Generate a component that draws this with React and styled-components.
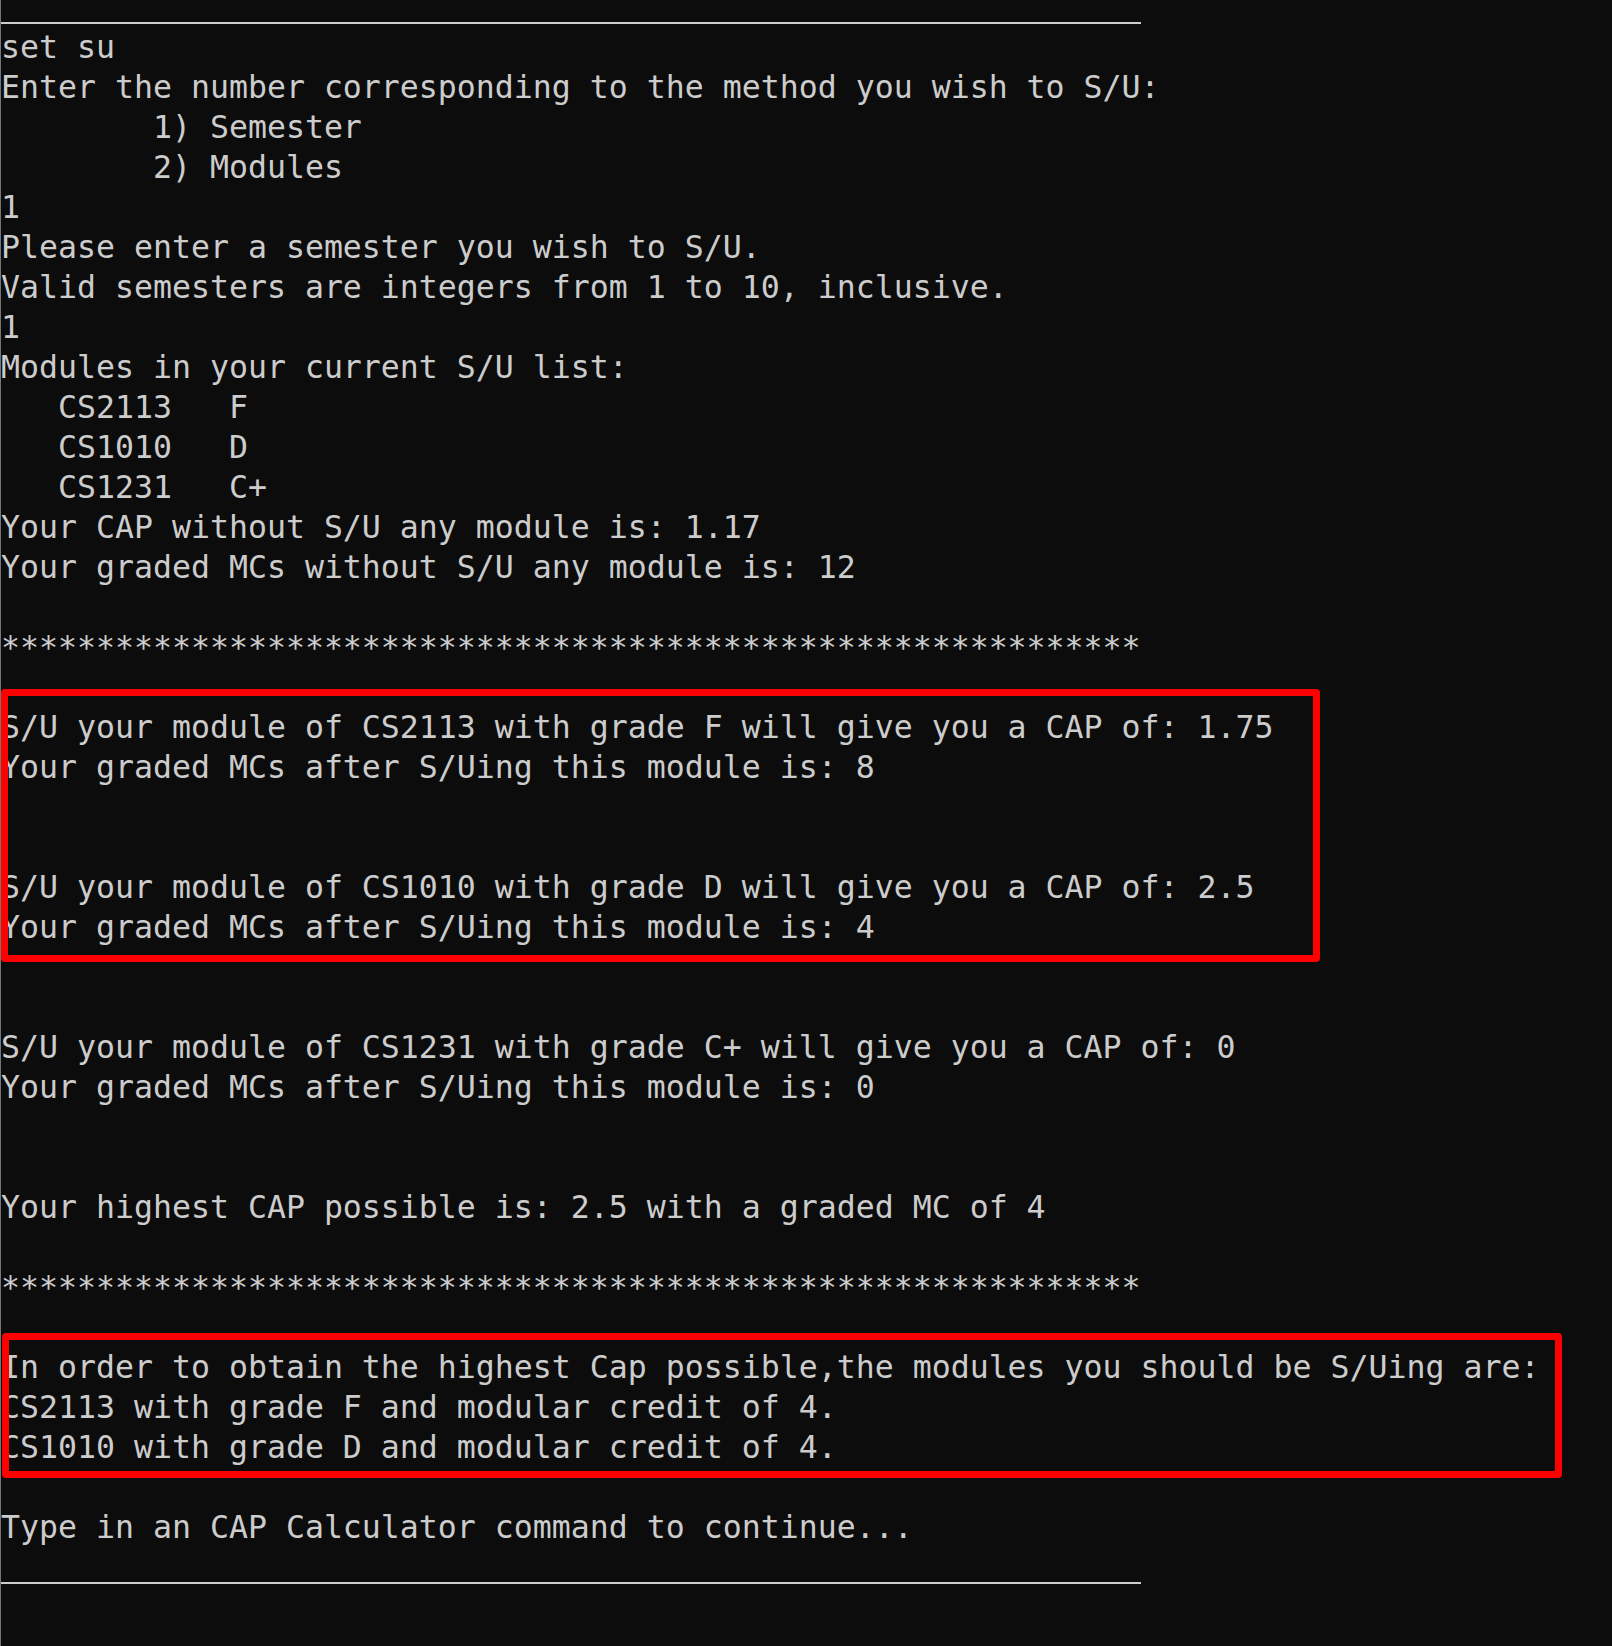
import React from "react";
import styled, { createGlobalStyle } from "styled-components";

const GlobalStyle = createGlobalStyle`
  html, body {
    margin: 0;
    padding: 0;
    background: #0c0c0c;
  }
  #root {
    min-height: 100vh;
  }
`;

const Screen = styled.main`
  box-sizing: border-box;
  min-height: 100vh;
  width: 1612px;
  border-left: 1px solid #767676;
  background: #0c0c0c;
  color: #cccccc;
  font-family: "DejaVu Sans Mono", "Liberation Mono", monospace;
  font-size: 31.56px;
  line-height: 40px;
  white-space: pre;
`;

const RuleRow = styled.div`
  height: ${(p) => p.$height}px;
  padding-top: ${(p) => p.$offset}px;
  box-sizing: border-box;
`;

const Divider = styled.hr`
  margin: 0;
  border: 0;
  width: 1140px;
  height: 2px;
  background: #cccccc;
`;

const Line = styled.div`
  height: 40px;
`;

const Highlight = styled.section`
  position: relative;

  &::after {
    content: "";
    position: absolute;
    pointer-events: none;
    box-sizing: border-box;
    top: ${(p) => p.$top}px;
    bottom: ${(p) => p.$bottom}px;
    left: ${(p) => p.$left}px;
    width: ${(p) => p.$width}px;
    border: 7px solid #ff0000;
    border-radius: 4px;
  }
`;

const STARS = "*".repeat(60);

const intro = [
  "set su",
  "Enter the number corresponding to the method you wish to S/U:",
  "        1) Semester",
  "        2) Modules",
  "1",
  "Please enter a semester you wish to S/U.",
  "Valid semesters are integers from 1 to 10, inclusive.",
  "1",
  "Modules in your current S/U list:",
  "   CS2113   F",
  "   CS1010   D",
  "   CS1231   C+",
  "Your CAP without S/U any module is: 1.17",
  "Your graded MCs without S/U any module is: 12",
  "",
  STARS,
  "",
];

const firstBox = [
  "S/U your module of CS2113 with grade F will give you a CAP of: 1.75",
  "Your graded MCs after S/Uing this module is: 8",
  "",
  "",
  "S/U your module of CS1010 with grade D will give you a CAP of: 2.5",
  "Your graded MCs after S/Uing this module is: 4",
];

const middle = [
  "",
  "",
  "S/U your module of CS1231 with grade C+ will give you a CAP of: 0",
  "Your graded MCs after S/Uing this module is: 0",
  "",
  "",
  "Your highest CAP possible is: 2.5 with a graded MC of 4",
  "",
  STARS,
  "",
];

const secondBox = [
  "In order to obtain the highest Cap possible,the modules you should be S/Uing are:",
  "CS2113 with grade F and modular credit of 4.",
  "CS1010 with grade D and modular credit of 4.",
];

const outro = ["", "Type in an CAP Calculator command to continue..."];

const Lines = ({ items }) =>
  items.map((text, i) => <Line key={i}>{text}</Line>);

export default function App() {
  return (
    <>
      <GlobalStyle />
      <Screen>
        <RuleRow $height={27} $offset={22}>
          <Divider />
        </RuleRow>
        <Lines items={intro} />
        <Highlight $top={-18} $bottom={-15} $left={0} $width={1319}>
          <Lines items={firstBox} />
        </Highlight>
        <Lines items={middle} />
        <Highlight $top={-14} $bottom={-11} $left={1} $width={1560}>
          <Lines items={secondBox} />
        </Highlight>
        <Lines items={outro} />
        <RuleRow $height={40} $offset={35}>
          <Divider />
        </RuleRow>
      </Screen>
    </>
  );
}
